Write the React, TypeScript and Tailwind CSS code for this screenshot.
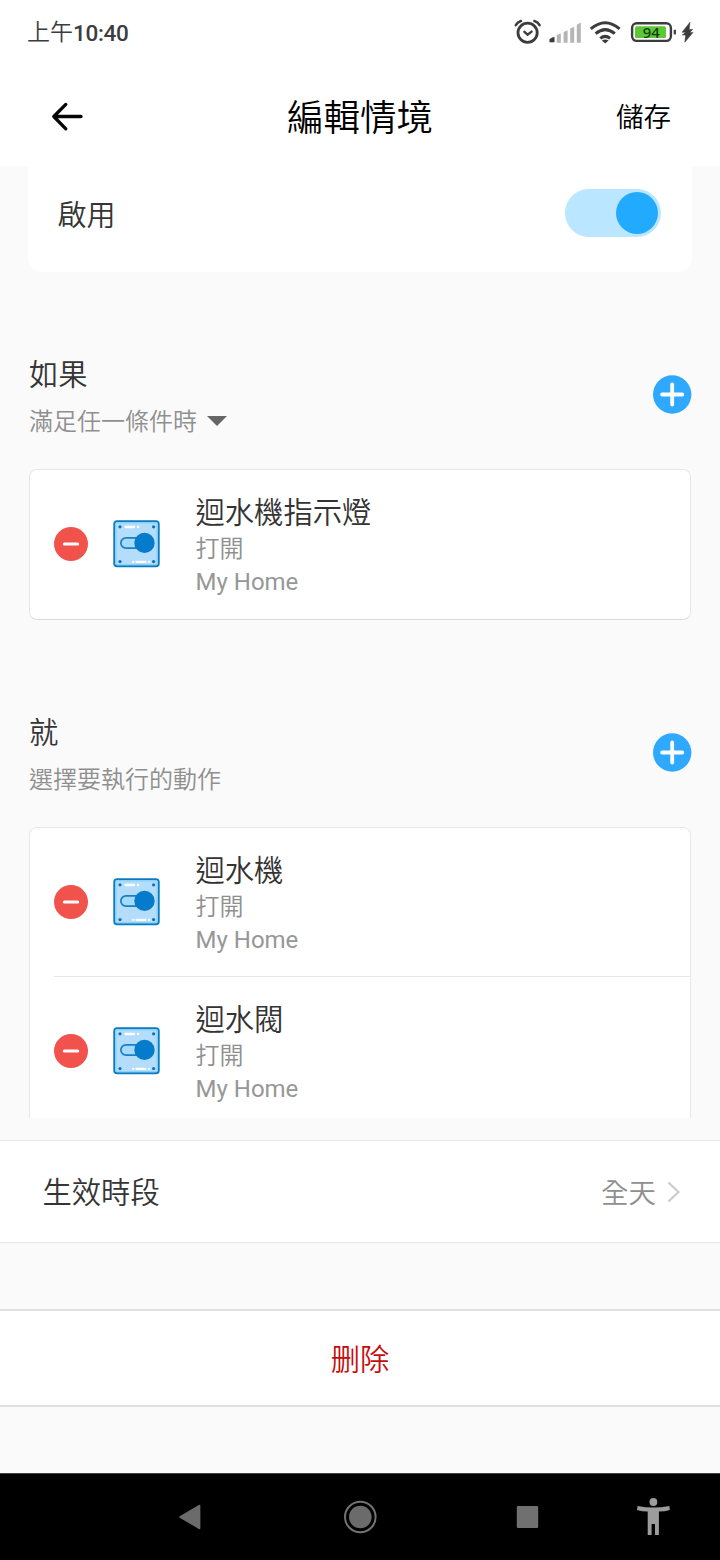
import React from "react";

type Device = { name: string; status: string; home: string };

const conditions: Device[] = [{ name: "迴水機指示燈", status: "打開", home: "My Home" }];
const actions: Device[] = [
  { name: "迴水機", status: "打開", home: "My Home" },
  { name: "迴水閥", status: "打開", home: "My Home" },
];

function StatusBar() {
  return (
    <div className="flex h-[66px] shrink-0 items-center justify-between pr-[26px] pl-[27px] text-[#3c3c3e]">
      <div className="flex items-center text-[23px] leading-[30px]">
        <span className="font-[350]">上午</span>
        <span className="text-[22.5px] font-medium tracking-[-0.3px]">10:40</span>
      </div>
      <svg className="h-[30px] w-[182px]" viewBox="512 18 182 30" fill="none">
        <g stroke="#3c3c3e" strokeWidth="2.8" strokeLinecap="round">
          <circle cx="527.6" cy="32.8" r="9.6" />
          <path d="M515.8 25.2Q517.6 22 521 21M539.6 25.2Q537.8 22 534.4 21" strokeWidth="2.5" />
          <path d="M524.4 31.8l3.2 2.8 4-3" strokeWidth="2.4" />
        </g>
        <path d="M549.8 42v-2.4q0-1.2 4.4-2.4V42z" fill="#3c3c3e" stroke="#3c3c3e" strokeWidth=".6" />
        <g fill="#b5b5b5">
          <path d="M556.8 35l4-1.8v9.6h-4zM563.6 32l4-1.8v12.6h-4zM570.2 28.6l4-1.8v16h-4zM576.8 24.8l4-2.2v20.2h-4z" />
        </g>
        <g stroke="#3c3c3e" strokeWidth="3" strokeLinecap="butt">
          <path d="M590.8 28.9Q605.2 16.5 619.6 28.9" />
          <path d="M595.6 33.7Q605.2 25.5 614.8 33.7" />
          <path d="M600.3 38.4Q605.2 34.3 610.1 38.4" />
        </g>
        <path d="M601.8 40.4q3.4-2 6.8 0l-3.4 3.2z" fill="#3c3c3e" />
        <rect x="632.1" y="23.3" width="38.8" height="17.6" rx="4.6" stroke="#3c3c3e" strokeWidth="2.4" />
        <rect x="635" y="26.2" width="31" height="11.8" rx="1.5" fill="#5cc837" />
        <path d="M674.8 29.8v4.6" stroke="#3c3c3e" strokeWidth="2.2" />
        <text x="651.3" y="37.6" textAnchor="middle" fontFamily="Noto Sans" fontSize="14.8" fontWeight="500" fill="#14380b">94</text>
        <path d="M690 22.2L682 32.3h3.6L682.2 35h3.4l-.8 7.2 8.2-9.8h-3.4l3.2-3h-3.6z" fill="#3c3c3e" stroke="#3c3c3e" strokeWidth=".5" />
      </svg>
    </div>
  );
}

function Header() {
  return (
    <header className="grid h-[100px] shrink-0 grid-cols-[1fr_auto_1fr] items-center pr-[49px] pl-[51px]">
      <svg className="h-8 w-8" viewBox="0 0 32 32" fill="none" stroke="#050505" strokeWidth="3.3" strokeLinecap="round" strokeLinejoin="round">
        <path d="M30 16.5H3M14.8 4.4L2.8 16.5 14.8 28.8" />
      </svg>
      <h1 className="pt-[6px] pr-[2px] text-[36.5px] leading-[50px] font-[350] text-black">編輯情境</h1>
      <button className="justify-self-end pt-1 text-[27.5px] leading-[40px] font-[350] text-black">儲存</button>
    </header>
  );
}

function AddButton() {
  return (
    <svg className="-mr-px h-[39px] w-[39px]" viewBox="0 0 39 39">
      <circle cx="19.2" cy="19.5" r="19.2" fill="#2ea9ff" />
      <path d="M9.1 19.5h20.2M19.2 9.4v20.2" stroke="#fff" strokeWidth="3.8" strokeLinecap="round" />
    </svg>
  );
}

function RemoveButton() {
  return (
    <svg className="h-[34px] w-[34px]" viewBox="0 0 34 34">
      <circle cx="17" cy="17" r="17" fill="#f1524c" />
      <path d="M10.3 17h13.4" stroke="#fff" strokeWidth="3" strokeLinecap="round" />
    </svg>
  );
}

function SwitchIcon() {
  return (
    <svg className="ml-[25px] h-12 w-[47px]" viewBox="0 0 47 48">
      <rect x="1.3" y="1.2" width="44.4" height="45" rx="2.8" fill="#b3ddfb" stroke="#0b7bc1" strokeWidth="2" />
      <rect x="2.9" y="2.8" width="41.2" height="41.8" rx="1" fill="none" stroke="#8bd2fb" strokeWidth="1.4" />
      <g fill="#0b72b8">
        <circle cx="7" cy="6.8" r="1.6" /><circle cx="40.6" cy="6.8" r="1.6" />
        <circle cx="7" cy="41.6" r="1.6" /><circle cx="40.6" cy="41.6" r="1.6" />
      </g>
      <path d="M12.6 7h8.4M25 7h.2M20.2 41.8h.2M23.6 41.8h8.8M36 41.8h.2" stroke="#fff" strokeWidth="2.3" strokeLinecap="round" />
      <path d="M30 17.8H13a5.1 5.1 0 0 0 0 10.3h17" fill="#a4dafc" stroke="#1d7fbd" strokeWidth="1.7" />
      <circle cx="31.5" cy="22.9" r="10.2" fill="#047bcb" />
    </svg>
  );
}

function DeviceRow({ device }: { device: Device }) {
  return (
    <div className="flex h-[149px] pl-6">
      <div className="flex h-[147px] items-center">
        <RemoveButton />
        <SwitchIcon />
      </div>
      <div className="ml-[35.5px] pt-[23px] font-[350]">
        <div className="h-10 text-[29.3px] leading-[41px] text-[#333]">{device.name}</div>
        <div className="h-[33px] text-[24px] leading-[33px] text-[#8f8f8f]">{device.status}</div>
        <div className="h-[33px] text-[24px] leading-[33px] font-normal text-[#979797]">{device.home}</div>
      </div>
    </div>
  );
}

function SectionHead({ title, hint, menu }: { title: string; hint: string; menu?: boolean }) {
  return (
    <div className="flex h-[84px] items-center justify-between">
      <div className="pt-2 font-[350]">
        <div className="h-[42px] text-[29.3px] leading-[42px] text-[#353535]">{title}</div>
        <div className="mt-[5px] flex h-[42px] items-center text-[24px] leading-[42px] text-[#8f8f8f]">
          {hint}
          {menu && (
            <svg className="ml-[10px] h-[11px] w-5" viewBox="0 0 20 11"><path d="M0 0h20l-10 10z" fill="#666" /></svg>
          )}
        </div>
      </div>
      <AddButton />
    </div>
  );
}

function NavBar() {
  return (
    <nav className="h-[87px] shrink-0 border-t border-[#444] bg-black">
      <svg className="h-[86px] w-full" viewBox="0 1474 720 86">
        <path d="M180 1517l19.6-11.5v23z" fill="#6b6b6b" stroke="#6b6b6b" strokeWidth="1.5" strokeLinejoin="round" />
        <circle cx="360.3" cy="1517" r="15.3" fill="none" stroke="#737373" strokeWidth="2" />
        <circle cx="360.3" cy="1517" r="11.3" fill="#6b6b6b" />
        <rect x="516.8" y="1506" width="21.4" height="22" rx="1" fill="#707070" />
        <g fill="#9c9c9c">
          <circle cx="653.4" cy="1502" r="3.9" />
          <path d="M637.6 1506q15.6 3 31.8 0l.4 4q-5 1.5-10.9 1.6v23.4H655v-11h-3.4v11h-3.9v-23.4q-5.7-.1-10.7-1.6z" />
        </g>
      </svg>
    </nav>
  );
}

export default function App() {
  return (
    <div lang="zh-Hant" className="flex h-[1560px] w-[720px] flex-col overflow-hidden bg-white font-['Roboto','Noto_Sans_CJK_TC',sans-serif]">
      <StatusBar />
      <Header />
      <main className="h-[952px] shrink-0 overflow-hidden bg-[#fafafa] px-[29px]">
        <div className="-mx-px flex h-[106px] items-start justify-between rounded-b-[14px] bg-white pr-[31.5px] pl-[29.5px]">
          <span className="mt-[30px] text-[29px] leading-[40px] font-[350] text-[#353535]">啟用</span>
          <div className="mt-[23px] flex h-12 w-24 items-center justify-end rounded-full bg-[#bae6ff] pr-[3px]">
            <div className="h-[42px] w-[42px] rounded-full bg-[#22aaff]" />
          </div>
        </div>
        <section className="mt-20">
          <SectionHead title="如果" hint="滿足任一條件時" menu />
          <div className="mt-[33px] overflow-hidden rounded-[8px] border border-[#e7e7e7] border-b-[#d9d9d9] bg-white">
            {conditions.map((d) => <DeviceRow key={d.name} device={d} />)}
          </div>
        </section>
        <section className="mt-[90px]">
          <SectionHead title="就" hint="選擇要執行的動作" />
          <div className="mt-[33px] overflow-hidden rounded-[8px] border border-[#e7e7e7] bg-white">
            {actions.map((d, i) => (
              <React.Fragment key={d.name}>
                {i > 0 && <div className="-mt-px ml-6 h-px bg-[#e7e7e7]" />}
                <DeviceRow device={d} />
              </React.Fragment>
            ))}
          </div>
        </section>
      </main>
      <div className="flex grow flex-col bg-[#fafafa] pt-[22px] font-[350]">
        <div className="flex h-[103px] items-center justify-between border-y border-[#e6e6e6] bg-white pr-10 pl-[42.5px]">
          <span className="pt-[3px] text-[29.3px] leading-10 text-[#353535]">生效時段</span>
          <span className="flex items-center text-[27.5px] leading-10 text-[#8f8f8f]">
            <span className="pt-[4px]">全天</span>
            <svg className="ml-[11px] h-[22px] w-[13px]" viewBox="0 0 13 22" fill="none" stroke="#cbcbcb" strokeWidth="2.2"><path d="M1.5 1.5L11.5 11 1.5 20.5" /></svg>
          </span>
        </div>
        <button className="mt-[66px] flex h-[98px] items-center justify-center border-y-2 border-[#e0e0e0] bg-white pt-[4px] text-[29.3px] leading-10 text-[#c40d0d]">删除</button>
      </div>
      <NavBar />
    </div>
  );
}
